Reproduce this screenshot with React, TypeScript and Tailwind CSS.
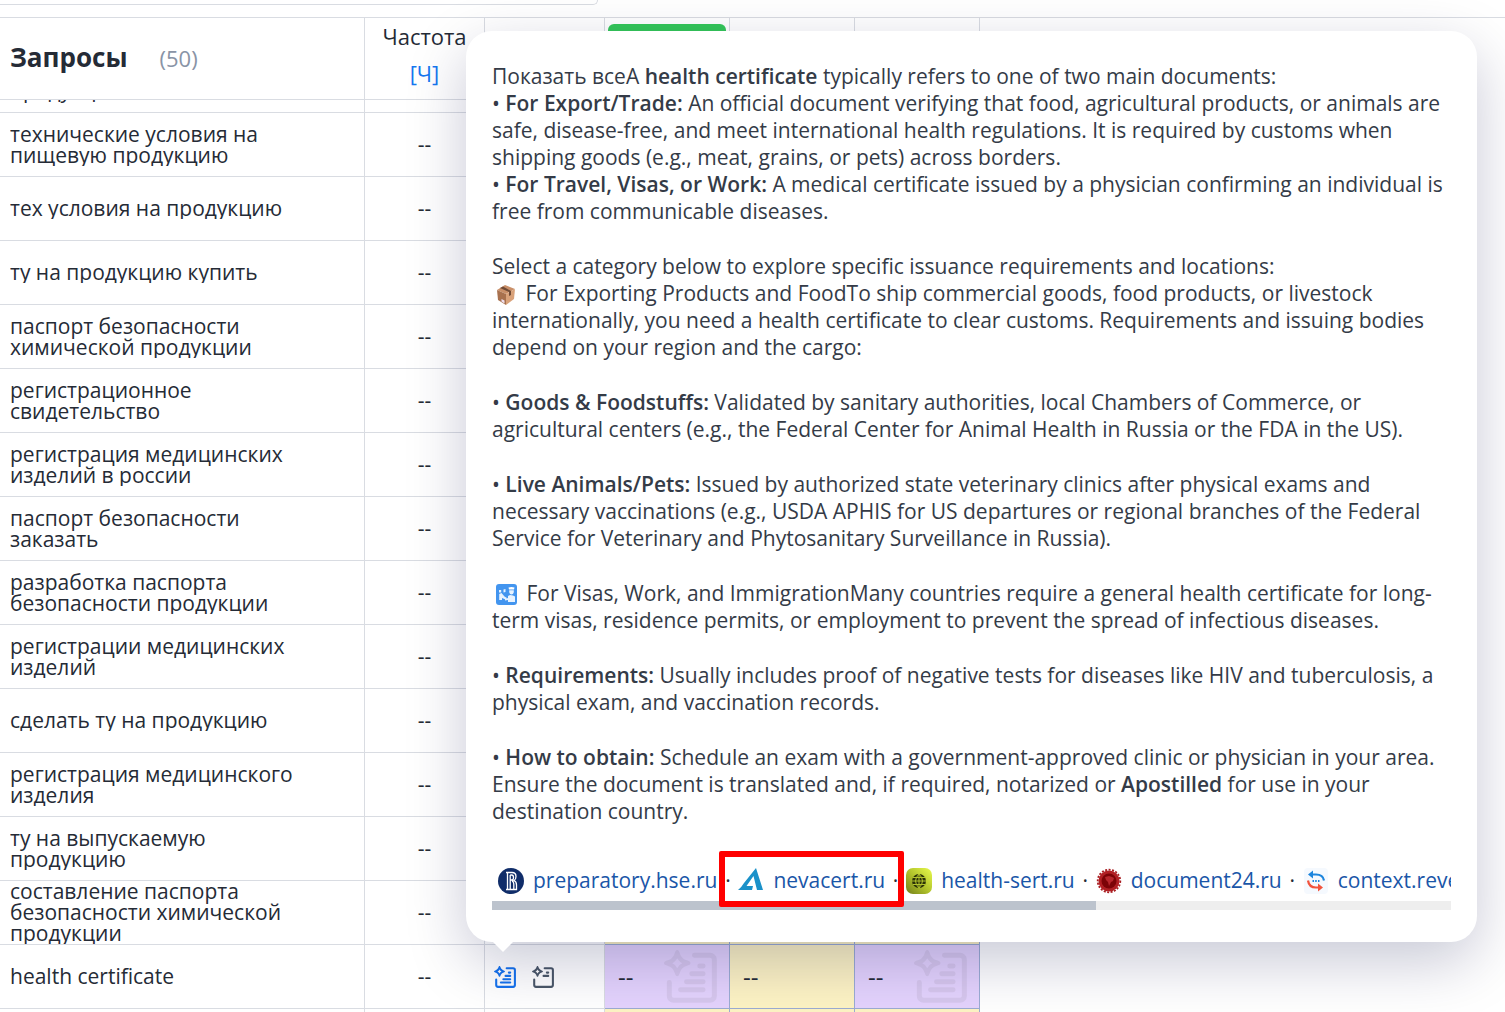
import React from 'react';

interface Source {
  domain: string;
  icon: React.ReactNode;
}

const queries: string[][] = [
  ['технические условия на', 'пищевую продукцию'],
  ['тех условия на продукцию'],
  ['ту на продукцию купить'],
  ['паспорт безопасности', 'химической продукции'],
  ['регистрационное', 'свидетельство'],
  ['регистрация медицинских', 'изделий в россии'],
  ['паспорт безопасности', 'заказать'],
  ['разработка паспорта', 'безопасности продукции'],
  ['регистрации медицинских', 'изделий'],
  ['сделать ту на продукцию'],
  ['регистрация медицинского', 'изделия'],
  ['ту на выпускаемую', 'продукцию'],
  ['составление паспорта', 'безопасности химической', 'продукции'],
];

const AnswerIcon = ({ className, short = false }: { className: string; short?: boolean }) => (
  <svg viewBox="0 0 160 160" className={className} fill="none" stroke="currentColor" strokeWidth="15" strokeLinecap="round" aria-hidden="true">
    <path
      fill="currentColor"
      fillRule="evenodd"
      stroke="none"
      d="M40 0c4 0 5 3 7 8 5 14 10 19 24 24 5 2 9 4 9 8s-4 5-9 7c-14 5-19 10-24 24-2 5-3 8-7 8s-5-3-7-8c-5-14-10-19-24-24-5-2-9-3-9-7s4-6 9-8c14-5 19-10 24-24 2-5 3-8 7-8Zm0 25c-4 7-8 11-15 15 7 4 11 8 15 15 4-7 8-11 15-15-7-4-11-8-15-15Z"
    />
    <path d="M92 16h47a13 13 0 0 1 13 13v110a13 13 0 0 1-13 13H29a13 13 0 0 1-13-13V98" />
    <path d={short ? 'M108 48h10M84 72h34' : 'M108 48h10M84 72h34M68 96h50M50 120h68'} />
  </svg>
);

const sources: Source[] = [
  {
    domain: 'preparatory.hse.ru',
    icon: (
      <svg viewBox="0 0 26 26" className="h-[26px] w-[26px]" aria-hidden="true">
        <circle cx="13" cy="13" r="13" fill="#102d69" />
        <path
          d="M8 4.5h6q4 0 4 4 0 3-2 4 2.500 1 2.500 4.500V21.500H8M9.500 4.500v17M12.200 7v14M12.200 7h1.500q1.800 0 1.800 2.500t-1.800 2.500h-1.500M14 13q1.800.5 1.800 3v5.500"
          fill="none"
          stroke="#fff"
          strokeWidth="1.300"
        />
      </svg>
    ),
  },
  {
    domain: 'nevacert.ru',
    icon: (
      <svg viewBox="0 0 26 26" className="h-[26px] w-[26px]" aria-hidden="true">
        <path d="M18 0 25 22h-6L15.500 8 8.500 18h6.500l-1 4H0Q3 20 6 15Z" fill="#1b91c9" />
      </svg>
    ),
  },
  {
    domain: 'health-sert.ru',
    icon: (
      <svg viewBox="0 0 26 26" className="h-[26px] w-[26px]" aria-hidden="true">
        <defs>
          <linearGradient id="lime" x1="0" y1="1" x2="1" y2="0">
            <stop offset="0" stopColor="#717e1a" />
            <stop offset=".5" stopColor="#b2c42c" />
            <stop offset="1" stopColor="#e9fb4d" />
          </linearGradient>
        </defs>
        <rect width="26" height="26" rx="7" fill="url(#lime)" />
        <circle cx="13" cy="13" r="7" fill="#2b3208" />
        <path d="M6 13h14M7 9.500h12M7 16.500h12M13 6v14M13 6q-7 7 0 14q7-7 0-14" fill="none" stroke="#b2c42c" strokeWidth="1" />
      </svg>
    ),
  },
  {
    domain: 'document24.ru',
    icon: (
      <svg viewBox="0 0 26 26" className="h-[26px] w-[26px]" aria-hidden="true">
        <circle cx="13" cy="13" r="10.500" fill="#b11f24" />
        <circle cx="13" cy="13" r="11.300" fill="none" stroke="#a81c20" strokeWidth="1.800" strokeDasharray="2 1.500" />
        <circle cx="13" cy="13" r="7.500" fill="#7c0307" />
        <path d="m9 9 4-1 3 1 2 1-1 3-2 1-2 4-1-4-2-2Z" fill="#b8262c" />
      </svg>
    ),
  },
  {
    domain: 'context.reverso.net',
    icon: (
      <svg viewBox="0 0 26 26" className="h-[26px] w-[26px]" aria-hidden="true">
        <rect x="1" width="24" height="26" rx="4" fill="#f5f9fe" />
        <path d="M8 6.500h5q7 0 8 6" fill="none" stroke="#1c85dd" strokeWidth="2.200" />
        <path d="m10 2.500-5 4 5 4Z" fill="#1c85dd" />
        <path d="M5 12.500q1 7 8 7h4" fill="none" stroke="#f2543d" strokeWidth="2.200" />
        <path d="m15 15.500 5 4-5 4Z" fill="#f2543d" />
        <path d="M9.500 13H11M12.200 13h1.500M15 13h1.500" stroke="#1c85dd" strokeWidth="1.800" />
      </svg>
    ),
  },
];

const BoxIcon = () => (
  <svg viewBox="0 0 20 21" className="mr-1 ml-1 inline-block h-[21px] w-5 align-[-4px]" role="img" aria-label="box">
    <path d="m1 6 8-5 10 4-9 5Z" fill="#c98f68" />
    <path d="m1 6 9 4v11l-8-5Z" fill="#a8714e" />
    <path d="m19 5-9 5v11l8-6Z" fill="#d9a27a" />
    <path d="m4 4 9 4v4l2-1V7L7 2.500Z" fill="#6f4b37" />
    <path d="m5.500 15 3 1.500v3l-3-2Z" fill="#f0dff0" />
  </svg>
);

const PassportIcon = () => (
  <svg viewBox="0 0 21 21" className="mr-1 ml-1 inline-block h-[21px] w-[21px] align-[-4px]" role="img" aria-label="passport control">
    <rect width="21" height="21" rx="3" fill="#4395ef" />
    <path d="M12.500 3.500q3-1 6 0l-.5 2h-5Z" fill="#fff" />
    <path d="M13.200 6.200h4.600v2q-.5 2.300-2.300 2.300t-2.300-2.300ZM12 12l2-1 3 .5 2 1V18h-7v-2l-3 .5V15l3-1ZM3 6h2.200v2.500H3ZM3.200 10l2.300-1 3 3.500L11 14l-2 1.200L6 14v2H3.200ZM7.500 5.500l2-.5v3l-2 .5Z" fill="#e8f3ff" />
  </svg>
);

const AnswerPopup = () => (
  <div className="absolute bottom-[46px] left-[-19px] z-10 w-[1011px] rounded-[26px] bg-white px-[26px] pt-8 pb-8 text-left shadow-[0_20px_60px_rgba(0,10,70,0.22)]">
    <div className="flex flex-col gap-7 text-[21px] leading-[27px] text-[#343b47]">
      <p>
        Показать всеA <b className="font-semibold">health certificate</b> typically refers to one of two main documents:<br />
        • <b className="font-semibold">For Export/Trade:</b> An official document verifying that food, agricultural products, or animals are<br />
        safe, disease-free, and meet international health regulations. It is required by customs when<br />
        shipping goods (e.g., meat, grains, or pets) across borders.<br />
        • <b className="font-semibold">For Travel, Visas, or Work:</b> A medical certificate issued by a physician confirming an individual is<br />
        free from communicable diseases.
      </p>
      <p>
        Select a category below to explore specific issuance requirements and locations:<br />
        <BoxIcon /> For Exporting Products and FoodTo ship commercial goods, food products, or livestock<br />
        internationally, you need a health certificate to clear customs. Requirements and issuing bodies<br />
        depend on your region and the cargo:
      </p>
      <p>
        • <b className="font-semibold">Goods &amp; Foodstuffs:</b> Validated by sanitary authorities, local Chambers of Commerce, or<br />
        agricultural centers (e.g., the Federal Center for Animal Health in Russia or the FDA in the US).
      </p>
      <p>
        • <b className="font-semibold">Live Animals/Pets:</b> Issued by authorized state veterinary clinics after physical exams and<br />
        necessary vaccinations (e.g., USDA APHIS for US departures or regional branches of the Federal<br />
        Service for Veterinary and Phytosanitary Surveillance in Russia).
      </p>
      <p>
        <PassportIcon /> For Visas, Work, and ImmigrationMany countries require a general health certificate for long-<br />
        term visas, residence permits, or employment to prevent the spread of infectious diseases.
      </p>
      <p>
        • <b className="font-semibold">Requirements:</b> Usually includes proof of negative tests for diseases like HIV and tuberculosis, a<br />
        physical exam, and vaccination records.
      </p>
      <p>
        • <b className="font-semibold">How to obtain:</b> Schedule an exam with a government-approved clinic or physician in your area.<br />
        Ensure the document is translated and, if required, notarized or <b className="font-semibold">Apostilled</b> for use in your<br />
        destination country.
      </p>
    </div>

    <div className="relative mt-9">
      <div className="flex h-10 items-center overflow-hidden pl-[6px] text-[21px] whitespace-nowrap">
        {sources.map((source, index) => (
          <React.Fragment key={source.domain}>
            {index > 0 && <span className="w-[21px] shrink-0 text-center">·</span>}
            <a href={`https://${source.domain}`} className="flex shrink-0 items-center gap-[9px] text-[#1a56a8]">
              {source.icon}
              {source.domain}
            </a>
          </React.Fragment>
        ))}
      </div>
      <div className="h-[9px] bg-[#eeeeee]">
        <div className="h-full w-[63%] bg-[#bcc3cd]" />
      </div>
      <div className="absolute -top-[10px] left-[227px] h-14 w-[185px] rounded-xs border-6 border-[#ff0000]" />
    </div>

    <div className="absolute top-full left-[27px] h-0 w-0 border-x-[10px] border-t-[10px] border-x-transparent border-t-white" />
  </div>
);

const nameCell = 'border-r border-b border-[#d9dce2] px-[10px]';
const plainCell = 'border-r border-b border-[#d9dce2] text-center';
const yellowCell = 'border-r border-b border-[#9bacd3] bg-[#fdf3c4] pl-[13px] text-2xl font-medium';
const purpleCell = 'border-r border-b border-[#9bacd3] bg-[#e4d3fd] pl-[13px] text-2xl font-medium';

const App = () => {
  return (
    <div className="h-screen overflow-hidden bg-white font-['Open_Sans',sans-serif] text-[21px] leading-[21px] text-[#252b36]">
      <div className="h-[5px] w-[598px] rounded-br-xl border-r border-b border-[#d9dce2]" />
      <div className="mt-3 border-t border-[#d9dce2]">
        <table className="w-[980px] table-fixed border-separate border-spacing-0">
          <colgroup>
            <col className="w-[365px]" />
            <col className="w-[120px]" />
            <col className="w-[120px]" />
            <col className="w-[125px]" />
            <col className="w-[125px]" />
            <col className="w-[125px]" />
          </colgroup>
          <thead>
            <tr className="h-[82px]">
              <th className="border-r border-b border-[#d9dce2] px-[10px] text-left">
                <span className="text-[26px] font-bold">Запросы</span>
                <span className="ml-8 text-[22px] font-normal text-[#8994a6]">(50)</span>
              </th>
              <th className="border-r border-b border-[#d9dce2] pb-2 font-normal">
                <div className="flex flex-col items-center gap-4 text-[22px] leading-[21px]">
                  <span>Частота</span>
                  <button type="button" className="text-[#1677f0]">[Ч]</button>
                </div>
              </th>
              <th className="border-r border-b border-[#d9dce2]" />
              <th className="border-r border-b border-[#d9dce2] px-[3px] pt-[6px] align-top">
                <div className="h-8 rounded-md bg-[#34c759]" />
              </th>
              <th className="border-r border-b border-[#d9dce2]" />
              <th className="border-r border-b border-[#d9dce2]" />
            </tr>
          </thead>
          <tbody>
            {/* row scrolled under the header */}
            <tr>
              <td className={nameCell}>
                <div className="flex h-3 flex-col justify-end overflow-hidden pb-[11px]">
                  <span>продукции</span>
                </div>
              </td>
              <td className={plainCell} />
              <td className={plainCell} />
              <td className={yellowCell} />
              <td className={yellowCell} />
              <td className={yellowCell} />
            </tr>
            {queries.map((lines) => (
              <tr key={lines.join(' ')} className="h-16">
                <td className={nameCell}>
                  <div className="overflow-hidden">
                    {lines.map((line) => (
                      <div key={line}>{line}</div>
                    ))}
                  </div>
                </td>
                <td className={plainCell}>--</td>
                <td className={plainCell} />
                <td className={yellowCell} />
                <td className={yellowCell} />
                <td className={yellowCell} />
              </tr>
            ))}
            <tr className="h-16">
              <td className={nameCell}>health certificate</td>
              <td className={plainCell}>--</td>
              <td className={plainCell}>
                <div className="relative flex gap-4 pl-[9px]">
                  <button type="button" aria-label="AI answer" className="text-[#1673ee]">
                    <AnswerIcon className="h-[22px] w-[22px]" />
                  </button>
                  <button type="button" aria-label="Saved answer" className="text-[#4b5868]">
                    <AnswerIcon className="h-[22px] w-[22px]" short />
                  </button>
                  <AnswerPopup />
                </div>
              </td>
              <td className={purpleCell}>
                <div className="flex items-center justify-between pr-3">
                  -- <AnswerIcon className="h-[53px] w-[53px] text-[#d7c7ee]" />
                </div>
              </td>
              <td className={yellowCell}>--</td>
              <td className={purpleCell}>
                <div className="flex items-center justify-between pr-3">
                  -- <AnswerIcon className="h-[53px] w-[53px] text-[#d7c7ee]" />
                </div>
              </td>
            </tr>
            <tr className="h-16">
              <td className={nameCell} />
              <td className={plainCell} />
              <td className={plainCell} />
              <td className={yellowCell} />
              <td className={yellowCell} />
              <td className={yellowCell} />
            </tr>
          </tbody>
        </table>
      </div>
    </div>
  );
};

export default App;
